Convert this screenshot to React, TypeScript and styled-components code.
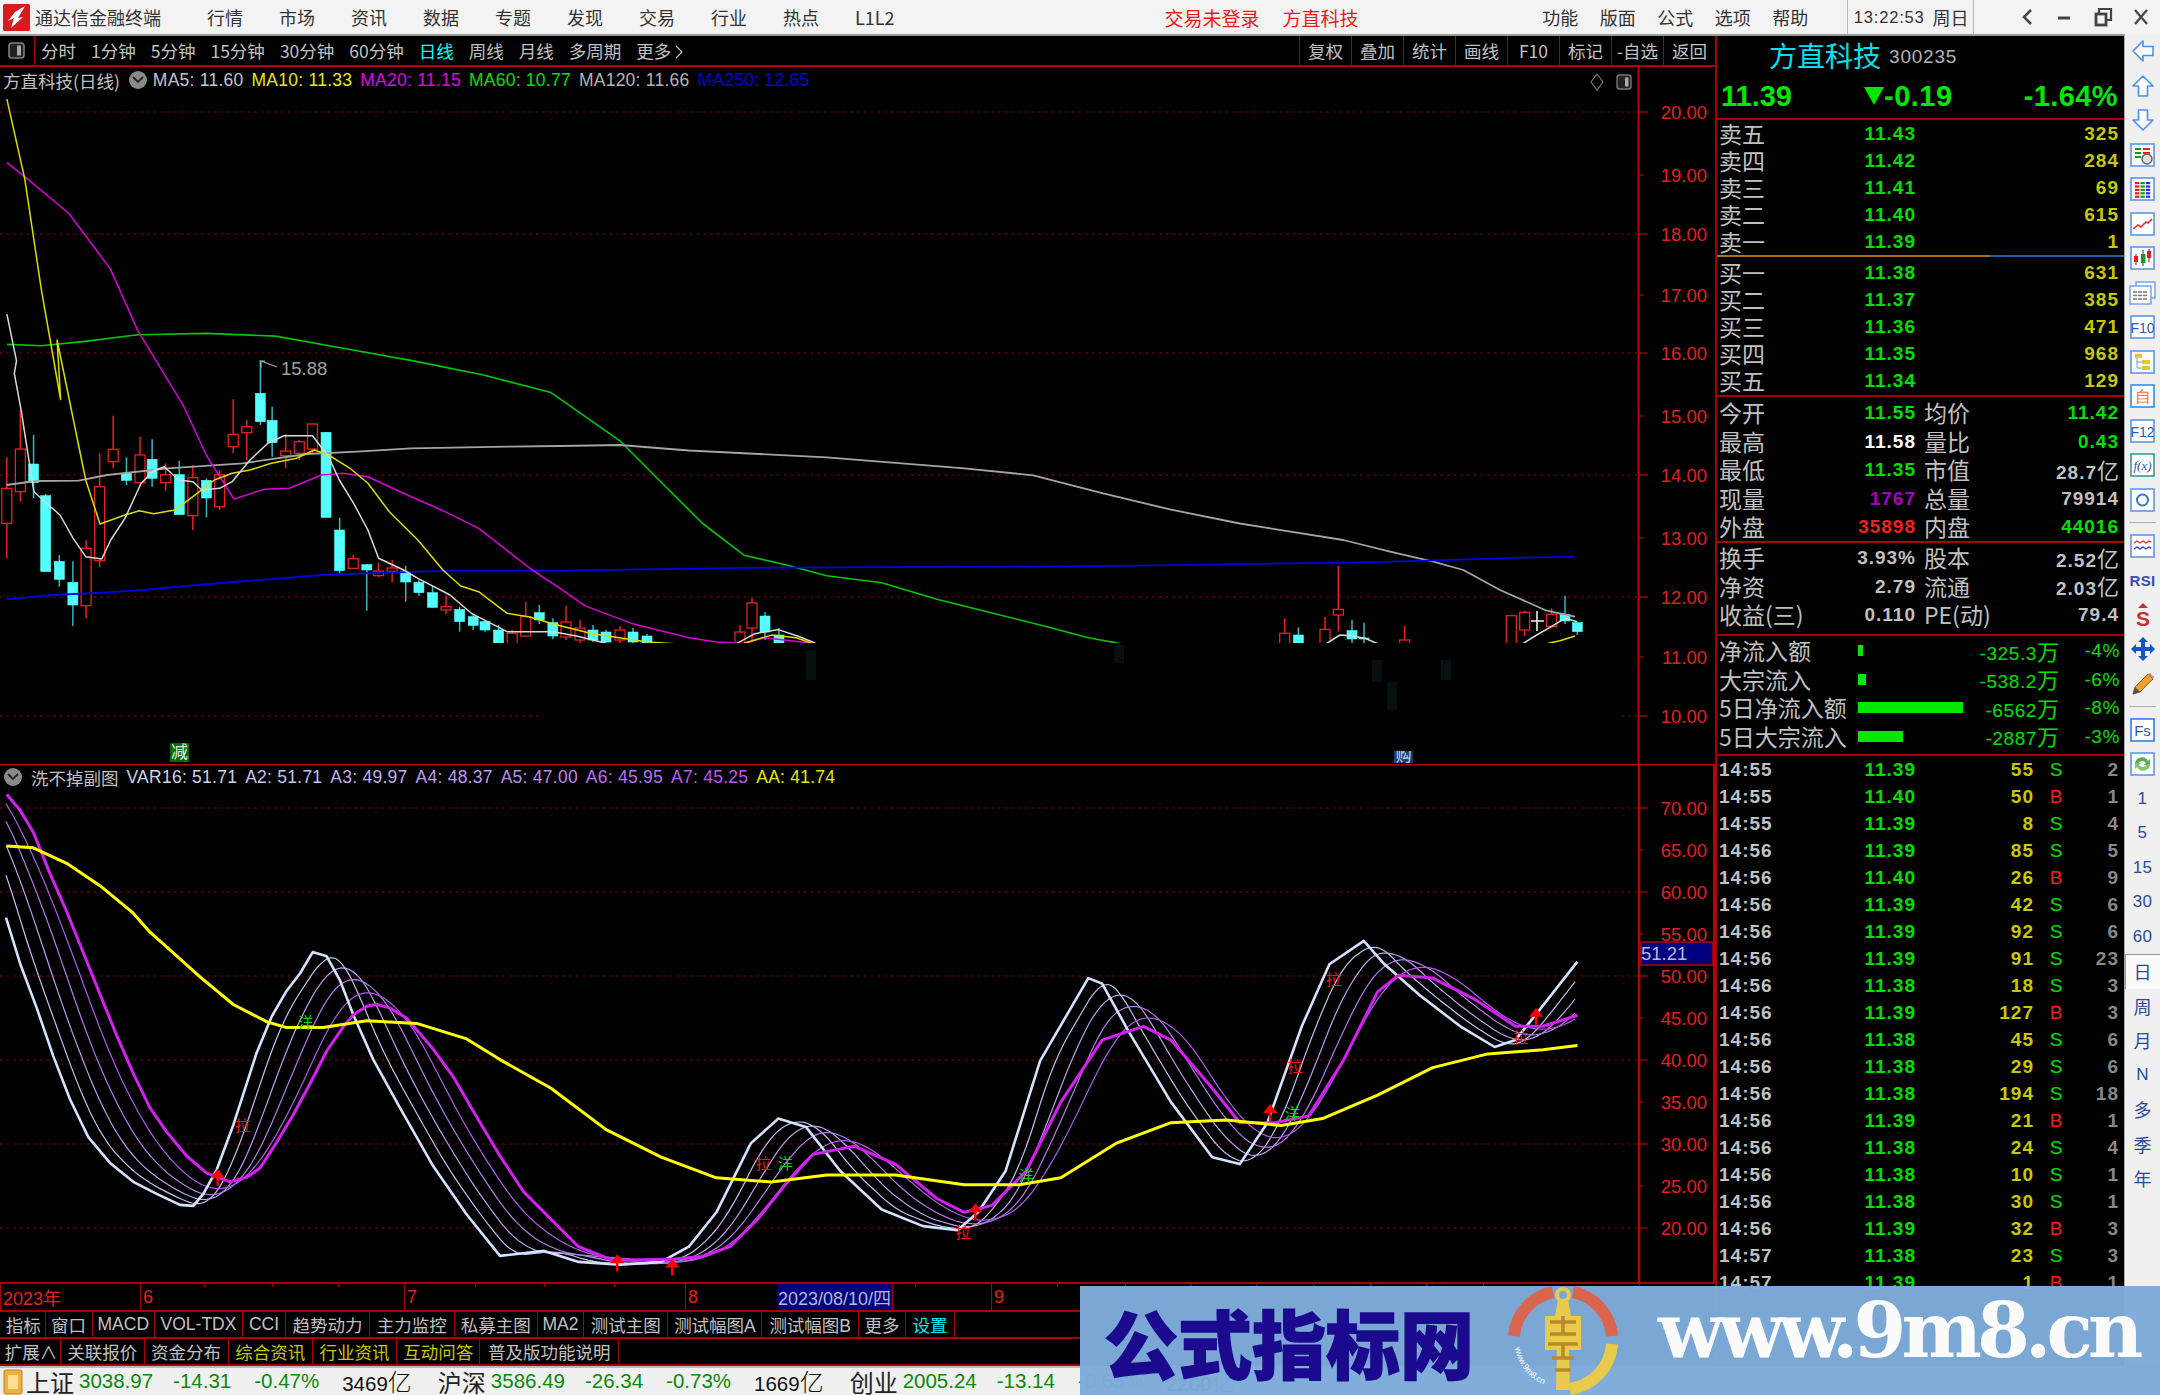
import React from "react";
import styled, { createGlobalStyle } from "styled-components";

const CJK = `"Noto Sans CJK SC", "Noto Sans CJK JP", sans-serif`;
const SANS = `"Liberation Sans", "Noto Sans CJK SC", sans-serif`;
const LINE = "#a80000";

const Global = createGlobalStyle`
  html, body { margin: 0; padding: 0; background: #000; }
  * { box-sizing: border-box; }
`;

const Root = styled.div`
  position: relative;
  width: 2160px;
  height: 1395px;
  overflow: hidden;
  background: #000;
  display: flex;
  flex-direction: column;
  font-family: ${SANS};
`;

/* ---------- title bar ---------- */
const TitleBar = styled.header`
  flex: 0 0 36px;
  height: 36px;
  background: #f3f3f3;
  border-bottom: 2px solid #9a9a9a;
  display: flex;
  align-items: center;
  padding-left: 3px;
  color: #333;
  font-family: ${CJK};
  font-size: 18px;
  white-space: nowrap;
`;
const Brand = styled.span`
  margin-left: 5px;
  width: 126px;
  letter-spacing: 0;
`;
const MainMenu = styled.nav`
  display: flex;
  gap: 36px;
  margin-left: 46px;
`;
const MenuText = styled.span<{ $c?: string }>`
  color: ${(p) => p.$c || "#333"};
`;
const AlertGroup = styled.div`
  display: flex;
  gap: 23px;
  margin-left: 270px;
  color: #f01818;
  font-size: 19px;
`;
const RightMenu = styled.div`
  display: flex;
  gap: 21.5px;
  margin-left: auto;
  align-items: center;
`;
const Clock = styled.div`
  display: flex;
  align-items: center;
  height: 34px;
  margin-left: 17px;
  padding: 0 4px 0 6px;
  border-left: 1px solid #bbb;
  border-right: 1px solid #bbb;
  gap: 8px;
  font-size: 18px;
`;
const ClockTime = styled.span`
  font-family: ${SANS};
  font-size: 16.5px;
  letter-spacing: 0.8px;
`;
const WinButtons = styled.div`
  display: flex;
  align-items: center;
  gap: 14px;
  margin: 0 7px 0 20px;
`;

/* ---------- main ---------- */
const Main = styled.div`
  flex: 0 0 1324px;
  display: flex;
`;
const ChartColumn = styled.section`
  flex: 0 0 1715px;
  display: flex;
  flex-direction: column;
`;

const Toolbar = styled.div`
  flex: 0 0 31px;
  display: flex;
  align-items: stretch;
  border-bottom: 2px solid ${LINE};
  color: #c0c0c0;
  font-family: ${CJK};
  font-size: 17.5px;
`;
const ToolIcon = styled.div`
  flex: 0 0 35px;
  display: flex;
  align-items: center;
  justify-content: center;
  padding-right: 2px;
  border-right: 1px solid ${LINE};
`;
const Periods = styled.div`
  display: flex;
  align-items: center;
  gap: 15px;
  padding-left: 6px;
`;
const Period = styled.span<{ $on?: boolean }>`
  color: ${(p) => (p.$on ? "#00ffff" : "#c0c0c0")};
  white-space: nowrap;
`;
const ToolTabs = styled.div`
  margin-left: auto;
  display: flex;
`;
const ToolTab = styled.div`
  width: 52px;
  display: flex;
  align-items: center;
  justify-content: center;
  border-left: 1px solid ${LINE};
  white-space: nowrap;
`;

const ChartBox = styled.div<{ $h: number }>`
  position: relative;
  flex: 0 0 ${(p) => p.$h}px;
  height: ${(p) => p.$h}px;
  svg { display: block; }
`;
const Legend = styled.div<{ $top: number }>`
  position: absolute;
  top: ${(p) => p.$top}px;
  left: 3px;
  display: flex;
  align-items: center;
  gap: 8px;
  white-space: nowrap;
  height: 20px;
`;
const LegendTitle = styled.span`
  color: #c0c0c0;
  font-family: ${CJK};
  font-size: 17.5px;
`;
const LegendItem = styled.span<{ $c: string }>`
  color: ${(p) => p.$c};
  font-family: "Liberation Sans", sans-serif;
  font-size: 17.5px;
  letter-spacing: 0.25px;
`;
const Chevron = styled.span`
  width: 18px;
  height: 18px;
  border-radius: 50%;
  background: #8a8a8a;
  display: flex;
  align-items: center;
  justify-content: center;
  margin: 0 -2px 0 1px;
`;

const DateAxis = styled.div`
  position: relative;
  flex: 0 0 25px;
  display: flex;
  border-top: 2px solid ${LINE};
  border-bottom: 2px solid ${LINE};
  color: #e02020;
  font-family: ${CJK};
  font-size: 18px;
`;
const DateCell = styled.div<{ $w: number; $on?: boolean }>`
  flex: 0 0 ${(p) => p.$w}px;
  display: flex;
  align-items: center;
  padding-left: ${(p) => (p.$on ? 1 : 2)}px;
  border-left: ${(p) => (p.$on ? "none" : `1px solid ${LINE}`)};
  background: ${(p) => (p.$on ? "#000080" : "transparent")};
  color: ${(p) => (p.$on ? "#b8b8d8" : "#e02020")};
  font-family: "Liberation Sans", "Noto Sans CJK SC", sans-serif;
  font-size: 18px;
  white-space: nowrap;
`;
const DateTick = styled.i`
  position: absolute;
  top: 0;
  width: 1px;
  height: 3px;
  background: ${LINE};
`;

const TabRow = styled.div<{ $h: number }>`
  flex: 0 0 ${(p) => p.$h}px;
  display: flex;
  padding-left: 2px;
  border-bottom: 2px solid ${LINE};
`;
const Tab = styled.div<{ $w: number; $c?: string }>`
  flex: 0 0 ${(p) => p.$w}px;
  display: flex;
  align-items: center;
  justify-content: center;
  border-right: 1px solid ${LINE};
  color: ${(p) => p.$c || "#c0c0c0"};
  font-family: ${SANS};
  font-size: 17.5px;
  white-space: nowrap;
`;

/* ---------- quote panel ---------- */
const Panel = styled.aside`
  flex: 0 0 409px;
  border-left: 2px solid ${LINE};
  display: flex;
  flex-direction: column;
  overflow: hidden;
`;
const NameRow = styled.div`
  flex: 0 0 38px;
  display: flex;
  align-items: center;
  padding-left: 52px;
  gap: 8px;
`;
const StockName = styled.span`
  color: #00e0f0;
  font-family: ${CJK};
  font-size: 28px;
  line-height: 1;
`;
const StockCode = styled.span`
  color: #b4b4b4;
  font-size: 19px;
  letter-spacing: 0.8px;
  margin-top: 3px;
`;
const PriceRow = styled.div`
  flex: 0 0 46px;
  display: flex;
  align-items: center;
  padding: 0 6px 0 4px;
  border-bottom: 2px solid ${LINE};
  color: #00e800;
  font-size: 29px;
  font-weight: 700;
`;
const PriceDelta = styled.span`
  display: flex;
  align-items: center;
  margin-left: 72px;
  letter-spacing: 0.5px;
`;
const PricePct = styled.span`
  margin-left: auto;
  letter-spacing: 0.4px;
`;
const BookDivider = styled.div`
  flex: 0 0 2px;
  background: linear-gradient(to right, #a87020 0 67%, #20609c 67% 100%);
  margin: 0 0 2px;
`;
const Section = styled.div<{ $pt?: number; $pb?: number; $line?: boolean }>`
  flex: none;
  padding-top: ${(p) => p.$pt || 0}px;
  padding-bottom: ${(p) => p.$pb || 0}px;
  border-bottom: ${(p) => (p.$line ? `2px solid ${LINE}` : "none")};
`;
const Row = styled.div<{ $h: number }>`
  height: ${(p) => p.$h}px;
  display: grid;
  grid-template-columns: 60px 137px 64px 1fr;
  align-items: center;
  padding: 0 5px 0 2px;
  white-space: nowrap;
`;
const Label = styled.span`
  color: #c0c0c0;
  font-family: ${CJK};
  font-size: 23px;
  line-height: 1;
`;
const Label2 = styled(Label)`
  padding-left: 8px;
`;
const Num = styled.span<{ $c?: string }>`
  color: ${(p) => p.$c || "#00e000"};
  font-size: 19px;
  font-weight: 700;
  letter-spacing: 1px;
  text-align: right;
  line-height: 1;
`;
const Unit = styled.span`
  font-family: ${CJK};
  font-size: 22px;
  font-weight: 400;
  letter-spacing: 0;
`;
const FundRow = styled.div`
  height: 28.5px;
  display: grid;
  grid-template-columns: 139px 105px 96px 1fr;
  align-items: center;
  padding: 0 4px 0 2px;
  white-space: nowrap;
`;
const FundBar = styled.i`
  display: block;
  height: 11px;
  background: #00e800;
`;
const FundNum = styled.span`
  color: #00e000;
  font-size: 19px;
  letter-spacing: 0.6px;
  text-align: right;
  line-height: 1;
`;
const TickRow = styled.div`
  height: 27px;
  display: grid;
  grid-template-columns: 60px 137px 118px 31px 1fr;
  align-items: center;
  padding: 0 5px 0 2px;
  font-size: 19px;
  font-weight: 700;
  letter-spacing: 1px;
  line-height: 1;
  white-space: nowrap;
`;
const TickTime = styled.span`
  color: #c0c0c0;
`;
const TickCell = styled.span<{ $c: string; $center?: boolean }>`
  color: ${(p) => p.$c};
  text-align: ${(p) => (p.$center ? "center" : "right")};
  font-weight: ${(p) => (p.$center ? 400 : 700)};
  padding-left: ${(p) => (p.$center ? 14 : 0)}px;
`;

/* ---------- side toolbar ---------- */
const SideBar = styled.nav`
  flex: 0 0 36px;
  margin-top: -2px;
  background: #f0f0f0;
  border-left: 1px solid #a8a8a8;
  display: flex;
  flex-direction: column;
  align-items: stretch;
  color: #2b4a9e;
`;
const SideItem = styled.div<{ $on?: boolean }>`
  flex: 0 0 34.5px;
  display: flex;
  align-items: center;
  justify-content: center;
  background: ${(p) => (p.$on ? "#fbfbfb" : "transparent")};
  box-shadow: ${(p) => (p.$on ? "inset 1px 1px 0 #999" : "none")};
`;
const SideSep = styled.div`
  flex: 0 0 11.5px;
  display: flex;
  align-items: center;
  padding: 0 4px;
  &::after { content: ""; width: 100%; height: 1px; background: #b0b0b0; }
`;
const SideNum = styled.span`
  font-size: 17px;
  letter-spacing: 0.3px;
`;
const SideCjk = styled.span`
  font-family: ${CJK};
  font-size: 18px;
`;

/* ---------- status bar ---------- */
const StatusBar = styled.footer`
  flex: 1;
  background: #f0f0f0;
  border-top: 2px solid #bbb;
  display: flex;
  align-items: center;
  padding-left: 3px;
  white-space: nowrap;
`;
const IndexLabel = styled.span`
  font-family: ${CJK};
  font-size: 24px;
  color: #222;
  line-height: 1;
  margin: 0 5px 0 3px;
`;
const IndexValue = styled.span<{ $ml?: number; $k?: boolean }>`
  color: ${(p) => (p.$k ? "#111" : "#0a8a0a")};
  font-size: 20.5px;
  line-height: 1;
  margin-left: ${(p) => p.$ml || 0}px;
`;
const IndexUnit = styled.span`
  font-family: ${CJK};
  font-size: 24px;
  font-weight: 300;
`;
const IndexGap = styled.span`
  width: 23px;
  flex: none;
`;

/* ---------- watermark ---------- */
const Watermark = styled.div`
  position: absolute;
  left: 1080px;
  top: 1286px;
  width: 1080px;
  height: 109px;
  background: rgba(126, 171, 217, 0.975);
  display: flex;
  align-items: center;
  padding-left: 24px;
`;
const WmName = styled.span`
  flex: 0 0 370px;
  color: #1b0a8e;
  font-family: ${CJK};
  font-weight: 900;
  font-size: 74px;
  line-height: 1;
  -webkit-text-stroke: 1.5px #1b0a8e;
  white-space: nowrap;
`;
const WmLogo = styled.div`
  margin-left: 34px;
  flex: 0 0 110px;
  height: 109px;
`;
const WmUrl = styled.span`
  margin-left: 40px;
  color: #fbfbfb;
  font-family: "DejaVu Serif", "Liberation Serif", serif;
  font-weight: 700;
  font-size: 76px;
  letter-spacing: -4.9px;
  line-height: 1;
  white-space: nowrap;
  padding-bottom: 20px;
`;

/* ---------- chart data ---------- */
type P = [number, number];
const z7 = (a: number[][]): P[] => a.map(([x, y]) => [x / 2.8, 340 + y / 3]);
const z8 = (a: number[][]): P[] => a.map(([x, y]) => [1250 + x / 3, 540 + y / 3]);
const z10 = (a: number[][]): P[] => a.map(([x, y]) => [x / 3, 760 + y / 2.904]);
const sh = (a: number[][]): P[] => a.map(([x, y]) => [x * 1.3776, y * 1.3776]);
const d = (p: P[]) => p.map((q) => `${q[0].toFixed(1)},${q[1].toFixed(1)}`).join(" ");

const ma5 = [
  ...sh([[5, 228], [12, 262]]),
  ...z7([[40, 100], [60, 215], [75, 320], [95, 455], [120, 480], [168, 525], [205, 595], [240, 650], [285, 657], [310, 600], [350, 535], [395, 430], [430, 392], [460, 380], [500, 420], [540, 425], [565, 450], [615, 445], [650, 425], [700, 360], [750, 310], [795, 287], [875, 287], [920, 350], [950, 420], [990, 490], [1030, 570], [1060, 655], [1130, 690], [1170, 715], [1260, 765], [1320, 820], [1420, 875], [1550, 875]]),
  ...sh([[420, 462], [440, 467]]),
];
const ma5b = [...sh([[535, 467], [548, 460], [565, 457], [580, 462], [592, 467]])];
const ma5c = z8([[230, 310], [270, 285], [300, 287], [345, 295], [385, 312]]);
const ma5d = z8([[820, 310], [860, 285], [900, 262], [945, 235], [982, 245]]);
const ma10 = [
  ...sh([[5, 72], [18, 130], [30, 210], [44, 290]]),
  ...z7([[160, 0], [200, 210], [240, 420], [280, 552], [350, 525], [390, 512], [430, 521], [490, 510], [540, 470], [600, 420], [650, 400], [700, 390], [760, 370], [830, 355], [880, 330], [920, 345], [980, 385], [1030, 430], [1090, 515], [1170, 600], [1240, 690], [1290, 738], [1340, 755], [1420, 820], [1480, 830], [1560, 855]]),
  ...sh([[430, 460], [470, 466], [500, 468]]),
];
const ma10b = sh([[540, 467], [560, 461], [578, 463], [592, 468]]);
const ma10c = z8([[895, 310], [930, 302], [975, 288]]);
const ma20 = [
  ...sh([[5, 118], [20, 130], [50, 155], [80, 195], [100, 240]]),
  ...z7([[515, 200], [580, 350], [655, 477], [740, 448], [810, 445], [900, 405], [960, 400], [1030, 410], [1120, 455], [1240, 512], [1340, 565], [1490, 690], [1568, 745]]),
  ...sh([[425, 440], [460, 453], [500, 463], [520, 466], [540, 467], [555, 463], [590, 467]]),
];
const ma60 = sh([[5, 250], [30, 251], [60, 248], [100, 243], [150, 242], [200, 244], [250, 253], [300, 262], [350, 272], [400, 285], [450, 320], [480, 350], [510, 380], [540, 403], [570, 410], [600, 418], [640, 423], [680, 435], [720, 445], [760, 455], [790, 463], [812, 467]]);
const ma120 = [
  ...z7([[18, 435], [100, 423], [220, 422], [300, 405], [470, 385], [680, 370], [860, 342], [1000, 335], [1150, 325], [1420, 320], [1568, 318]]),
  ...sh([[450, 323], [500, 327], [600, 332], [700, 340], [750, 345], [800, 358], [850, 370], [900, 380]]),
  ...z8([[280, 0], [420, 35], [550, 65], [640, 90], [750, 150], [890, 212], [975, 230]]),
];
const ma250 = [
  ...z7([[18, 778], [150, 765], [300, 757], [400, 750], [520, 738], [750, 718], [900, 705], [1020, 700], [1270, 692], [1568, 692]]),
  ...sh([[560, 412], [800, 411], [1000, 408], [1100, 405], [1143, 404]]),
];

type C = [number, string, number, number, number, number];
const left: number[][] = [
  [19, 0, 352, 445, 550, 655], [57, 0, 210, 327, 455, 485], [94, 1, 285, 372, 428, 475], [128, 1, 462, 467, 695, 695],
  [166, 1, 645, 664, 718, 740], [204, 1, 664, 727, 795, 858], [241, 0, 600, 625, 797, 835], [279, 0, 340, 440, 662, 682],
  [317, 0, 227, 328, 365, 385], [354, 1, 352, 400, 421, 435], [392, 0, 290, 345, 428, 430], [426, 1, 298, 358, 415, 440],
  [464, 0, 370, 404, 428, 452], [502, 1, 362, 404, 524, 524], [540, 0, 376, 413, 527, 570], [578, 1, 415, 421, 474, 532],
  [615, 0, 390, 404, 500, 510], [653, 0, 178, 283, 320, 340], [691, 0, 240, 260, 278, 360], [729, 1, 60, 160, 245, 255],
  [762, 1, 200, 241, 308, 350], [800, 0, 282, 333, 347, 385], [838, 0, 300, 305, 340, 360], [875, 0, 250, 252, 327, 340],
  [913, 1, 277, 277, 532, 532], [951, 1, 533, 570, 692, 700], [989, 0, 645, 656, 685, 685], [1027, 1, 672, 674, 690, 812],
  [1060, 0, 668, 693, 707, 712], [1098, 0, 660, 684, 694, 727], [1136, 1, 678, 695, 726, 785], [1173, 1, 720, 727, 758, 768],
  [1211, 1, 738, 758, 802, 803], [1249, 0, 766, 800, 810, 822], [1287, 1, 800, 808, 845, 875], [1325, 1, 822, 830, 856, 870],
  [1358, 1, 842, 845, 870, 875], [1396, 1, 855, 870, 930, 935], [1434, 0, 870, 880, 932, 946], [1472, 0, 785, 830, 888, 888],
  [1510, 1, 795, 818, 840, 852], [1548, 1, 835, 848, 888, 898],
];
const right: number[][] = [
  [104, 0, 235, 280, 400, 400], [145, 1, 262, 285, 400, 400], [225, 0, 230, 268, 400, 400], [265, 0, 78, 208, 225, 275],
  [306, 1, 240, 272, 297, 310], [342, 1, 248, 294, 297, 310], [464, 0, 258, 300, 400, 400], [784, 0, 227, 227, 400, 400],
  [824, 0, 212, 217, 270, 288], [905, 0, 205, 223, 260, 262], [945, 1, 167, 224, 243, 252], [982, 1, 248, 248, 275, 285],
];
const mid: C[] = [
  [566, "r", 606, 622, 637, 640], [580, "r", 620, 628, 640, 643], [593, "c", 625, 630, 640, 642], [606, "c", 630, 632, 642, 643],
  [620, "r", 626, 630, 640, 643], [633, "c", 628, 632, 642, 643], [647, "c", 634, 636, 643, 643], [740, "r", 625, 632, 660, 660],
  [752, "r", 598, 603, 628, 640], [765, "c", 612, 616, 632, 640], [779, "c", 628, 635, 660, 660],
];
const candles: C[] = [
  ...left.map((c): C => [c[0] / 2.8, c[1] ? "c" : "r", 340 + c[2] / 3, 340 + c[3] / 3, 340 + c[4] / 3, 340 + c[5] / 3]),
  ...mid,
  ...right.map((c): C => [1250 + c[0] / 3, c[1] ? "c" : "r", 540 + c[2] / 3, 540 + c[3] / 3, 540 + c[4] / 3, 540 + c[5] / 3]),
];

const lineL: P[] = [
  ...z10([[-270, -40], [-198, 20], [-162, 60], [-126, 125], [-90, 175], [-54, 245], [-18, 340], [18, 458], [60, 590], [110, 720], [160, 860], [210, 985], [265, 1095], [330, 1170], [400, 1225], [470, 1260], [540, 1292], [580, 1295], [610, 1260], [650, 1190], [700, 1060], [740, 940], [770, 850], [815, 745], [860, 670], [900, 620], [938, 558], [980, 570], [1020, 640], [1060, 740], [1120, 870], [1200, 1010], [1300, 1180], [1400, 1320], [1500, 1440]]),
  ...sh([[395, 908], [420, 916], [450, 918], [480, 916], [500, 905], [520, 880], [545, 830], [565, 812], [585, 818], [610, 850], [640, 878], [670, 890], [695, 893], [710, 880], [730, 850], [755, 770], [790, 710], [800, 714], [820, 750], [850, 800], [880, 840], [900, 845], [920, 815], [945, 745], [965, 700], [990, 683], [1005, 700], [1030, 722], [1060, 745], [1085, 760], [1100, 755], [1120, 730], [1145, 698]]),
];
const lineM: P[] = [
  ...z10([[20, 100], [60, 145], [100, 210], [150, 330], [200, 440], [250, 560], [300, 680], [350, 800], [400, 910], [450, 1010], [500, 1080], [560, 1150], [620, 1200], [690, 1225], [740, 1212], [780, 1185], [830, 1110], [880, 1030], [930, 940], [980, 845], [1030, 775], [1060, 740], [1100, 715], [1130, 710], [1170, 720], [1220, 750], [1300, 840], [1360, 920], [1420, 1020], [1500, 1150]]),
  ...sh([[380, 865], [400, 885], [420, 905], [445, 915], [490, 914], [510, 912], [530, 905], [550, 885], [570, 860], [590, 838], [620, 832], [650, 845], [680, 870], [700, 880], [720, 875], [745, 850], [770, 800], [800, 755], [830, 745], [850, 755], [880, 790], [900, 815], [925, 815], [950, 810], [975, 770], [1000, 720], [1015, 708], [1040, 710], [1070, 725], [1100, 745], [1120, 745], [1145, 737]]),
];
const lineY: P[] = [
  ...z10([[20, 250], [100, 255], [200, 300], [300, 365], [400, 445], [450, 500], [520, 560], [600, 630], [700, 710], [800, 760], [860, 777], [970, 777], [1100, 757], [1250, 765], [1400, 810], [1500, 870]]),
  ...sh([[400, 790], [440, 820], [480, 840], [520, 855], [560, 858], [600, 853], [650, 853], [700, 860], [740, 860], [770, 855], [810, 830], [850, 815], [890, 813], [930, 817], [960, 812], [1000, 795], [1040, 775], [1080, 765], [1120, 762], [1145, 759]]),
];
const valueAt = (line: P[], x: number) => {
  if (x <= line[0][0]) return line[0][1];
  for (let i = 1; i < line.length; i++) {
    if (x <= line[i][0]) {
      const [x0, y0] = line[i - 1];
      const [x1, y1] = line[i];
      return y0 + ((y1 - y0) * (x - x0)) / (x1 - x0);
    }
  }
  return line[line.length - 1][1];
};
const smoothed = (win: number): P[] => {
  const out: P[] = [];
  for (let x = 6; x <= 1577; x += 3) {
    let sum = 0;
    let n = 0;
    for (let t = x - win; t <= x; t += 3) {
      sum += valueAt(lineL, t);
      n++;
    }
    out.push([x, sum / n]);
  }
  return out;
};
const thin = [
  { win: 27, c: "#c8c0f4" },
  { win: 54, c: "#bca0ec" },
  { win: 81, c: "#b47ce8" },
  { win: 108, c: "#ae5ce8" },
];

const sigArrow = sh([[158, 855], [448, 917], [488, 920], [708, 880], [922, 808], [1115, 738]]);
const sigLa = sh([[176, 817], [554, 844], [699, 894], [940, 774], [968, 711], [1104, 753]]);
const sigGreen = sh([[222, 742], [570, 844], [745, 853], [938, 808]]);

const topAxis: [number, string, boolean][] = [
  [112, "20.00", true], [175, "19.00", false], [234, "18.00", true], [295, "17.00", false], [353, "16.00", true],
  [416, "15.00", false], [475, "14.00", true], [538, "13.00", false], [597, "12.00", true], [657, "11.00", false], [716, "10.00", true],
];
const subAxis = [70, 65, 60, 55, 50, 45, 40, 35, 30, 25, 20];

const TopChart = () => (
  <svg width={1715} height={697} viewBox="0 67 1715 697" fontFamily="Liberation Sans, sans-serif">
    <defs>
      <clipPath id="cut"><rect x="0" y="67" width="1638" height="576" /></clipPath>
      <clipPath id="lbl"><rect x="1385" y="751" width="40" height="12" /></clipPath>
    </defs>
    {topAxis.filter((a) => a[2]).map((a) => (
      <line key={a[0]} x1="0" x2={a[0] === 716 ? 537 : 1638} y1={a[0]} y2={a[0]} stroke="#b00000" strokeDasharray="2 4.7" />
    ))}
    <line x1="1622" x2="1638" y1="716" y2="716" stroke="#b00000" strokeDasharray="2 4.7" />
    <line x1="1638.5" x2="1638.5" y1="67" y2="764" stroke="#c00000" strokeWidth="2" />
    {topAxis.map((a) => (
      <g key={a[1]}>
        <line x1="1640" x2={a[2] ? 1647 : 1643} y1={a[0]} y2={a[0]} stroke="#c00000" strokeWidth="1.2" />
        <text x="1707" y={a[0] + 7} textAnchor="end" fontSize="18.5" fill="#e02020">{a[1]}</text>
      </g>
    ))}
    <g clipPath="url(#cut)">
      {candles.map((c, i) => {
        const col = c[1] === "c" ? "#54ffff" : "#e82020";
        return (
          <g key={i}>
            <line x1={c[0]} x2={c[0]} y1={c[2]} y2={c[5]} stroke={c[1] === "c" ? "#30b8c0" : col} strokeWidth="1.5" />
            <rect x={c[0] - 5} y={c[3]} width="10" height={Math.max(c[4] - c[3], 1)} fill={c[1] === "c" ? col : "#000"} stroke={col} strokeWidth={c[1] === "c" ? 0.6 : 1.3} />
          </g>
        );
      })}
      <path d="M1537 611v20M1531 621h13" stroke="#eee" strokeWidth="1.6" />
      <g fill="none" strokeLinejoin="round">
        <polyline points={d(ma60)} stroke="#00c800" strokeWidth="1.6" />
        <polyline points={d(ma120)} stroke="#a4a4a4" strokeWidth="1.8" />
        <polyline points={d(ma250)} stroke="#0000e8" strokeWidth="1.8" />
        <polyline points={d(ma20)} stroke="#d800d8" strokeWidth="1.5" />
        <polyline points={d(ma10)} stroke="#dcdc00" strokeWidth="1.5" />
        <polyline points={d(ma10b)} stroke="#dcdc00" strokeWidth="1.5" />
        <polyline points={d(ma10c)} stroke="#dcdc00" strokeWidth="1.5" />
        <polyline points={d(ma5)} stroke="#d8d8d8" strokeWidth="1.5" />
        <polyline points={d(ma5b)} stroke="#d8d8d8" strokeWidth="1.5" />
        <polyline points={d(ma5c)} stroke="#d8d8d8" strokeWidth="1.5" />
        <polyline points={d(ma5d)} stroke="#d8d8d8" strokeWidth="1.5" />
      </g>
    </g>
    <g fill="#071010">
      <rect x="806" y="650" width="10" height="30" />
      <rect x="1372" y="660" width="10" height="22" />
      <rect x="1387" y="682" width="10" height="28" />
      <rect x="1441" y="660" width="10" height="20" />
      <rect x="1114" y="645" width="10" height="18" />
    </g>
    <path d="M261 361l16 6M261 361v7M261 361h4" stroke="#a8a8a8" fill="none" strokeWidth="1.1" />
    <text x="281" y="375" fontSize="18.5" fill="#a0a0a0">15.88</text>
    <rect x="170" y="743" width="19" height="19" fill="#006c00" />
    <text x="179.5" y="758" textAnchor="middle" fontSize="17" fontFamily="Noto Sans CJK SC, sans-serif" fill="#e8e8e8">减</text>
    <g clipPath="url(#lbl)">
      <rect x="1394" y="751" width="19" height="12" fill="#104070" />
      <text x="1403.5" y="761" textAnchor="middle" fontSize="16" fontFamily="Noto Sans CJK SC, sans-serif" fill="#d0d8e8">购</text>
    </g>
    <path d="M1597 74l6 8-6 8-6-8z" fill="none" stroke="#777" strokeWidth="1.2" />
    <rect x="1617" y="75" width="14" height="14" rx="2.5" fill="#222" stroke="#777" strokeWidth="1.4" />
    <rect x="1625" y="77.5" width="3.5" height="9" fill="#aaa" />
  </svg>
);

const SubChart = () => (
  <svg width={1715} height={518} viewBox="0 764 1715 518" fontFamily="Liberation Sans, sans-serif">
    <line x1="0" x2="1715" y1="764.5" y2="764.5" stroke="#c00000" strokeWidth="2" />
    {subAxis.filter((v) => v % 10 === 0).map((v) => {
      const y = 808 + (70 - v) * 8.4;
      return <line key={v} x1="0" x2="1638" y1={y} y2={y} stroke="#b00000" strokeDasharray="2 4.7" />;
    })}
    <line x1="1639" x2="1639" y1="764" y2="1282" stroke="#c00000" strokeWidth="2.4" />
    <line x1="1714" x2="1714" y1="764" y2="1282" stroke="#c00000" strokeWidth="2" />
    {subAxis.map((v) => {
      const y = 808 + (70 - v) * 8.4;
      return (
        <g key={v}>
          <line x1="1640" x2={v % 10 === 0 ? 1647 : 1643} y1={y} y2={y} stroke="#c00000" strokeWidth="1.2" />
          <text x="1707" y={y + 7} textAnchor="end" fontSize="18.5" fill="#e02020">{v}.00</text>
        </g>
      );
    })}
    <rect x="1641" y="942" width="72" height="23" fill="#000080" stroke="#c00000" strokeWidth="1.4" />
    <text x="1641" y="960" fontSize="18.5" fill="#b8b8d8">51.21</text>
    <g fill="none" strokeLinejoin="round">
      {thin.map((t) => (
        <polyline key={t.win} points={d(smoothed(t.win))} stroke={t.c} strokeWidth="1.2" />
      ))}
      <polyline points={d(lineL.filter((p) => p[0] >= 5))} stroke="#d2e2ff" strokeWidth="2.6" />
      <polyline points={d(lineM)} stroke="#d420f0" strokeWidth="3" />
      <polyline points={d(lineY)} stroke="#ffff00" strokeWidth="3" />
    </g>
    {sigArrow.map((p, i) => (
      <path key={i} d={`M${p[0]} ${p[1] - 9}l7 9h-5.8v8h-2.4v-8h-5.8z`} fill="#ff0000" />
    ))}
    <g fontFamily="Noto Sans CJK SC, sans-serif" fontSize="15" textAnchor="middle">
      {sigLa.map((p, i) => (
        <text key={i} x={p[0]} y={p[1] + 6} fill="#ff1010">拉</text>
      ))}
      {sigGreen.map((p, i) => (
        <text key={i} x={p[0]} y={p[1] + 6} fill="#00e000">洋</text>
      ))}
    </g>
  </svg>
);

const AppLogo = () => (
  <svg width="27" height="27" viewBox="0 0 27 27">
    <rect width="27" height="27" rx="1.5" fill="#d81c1c" />
    <path d="M22 2 12 8 5 17l6-3-3 10 12-11-5 1z" fill="#fff" />
  </svg>
);

const Box = ({ children, c = "#5b98ee" }: { children: React.ReactNode; c?: string }) => (
  <svg width="25" height="24" viewBox="0 0 25 24">
    <rect x="1" y="1" width="23" height="22" fill="#fff" stroke={c} strokeWidth="1.6" />
    {children}
  </svg>
);
const BoxText = ({ t, c = "#2b5ab0", s = 15 }: { t: string; c?: string; s?: number }) => (
  <text x="12.5" y="17.5" textAnchor="middle" fontSize={s} fontFamily="Liberation Sans, sans-serif" fill={c}>{t}</text>
);
const Arrow = ({ rot }: { rot: number }) => (
  <svg width="24" height="24" viewBox="0 0 24 24">
    <path transform={`rotate(${rot} 12 12)`} d="M12 2 22 12h-5.5v10h-9V12H2z" fill="#fff" stroke="#4a90f0" strokeWidth="1.6" strokeLinejoin="round" />
  </svg>
);
const bars = (colors: string[]) =>
  colors.map((c, i) => <rect key={i} x={5 + (i % 3) * 5.4} y={5 + Math.floor(i / 3) * 3.4} width="4.4" height="2.2" fill={c} />);

const sideItems: React.ReactNode[] = [
  <Arrow rot={-90} />, <Arrow rot={0} />, <Arrow rot={180} />,
  <Box><rect x="5" y="5" width="6" height="2" fill="#1a9a1a" /><rect x="13" y="5" width="7" height="2" fill="#e02020" /><rect x="5" y="9" width="6" height="2" fill="#1a9a1a" /><rect x="13" y="9" width="7" height="2" fill="#e02020" /><rect x="5" y="13" width="6" height="2" fill="#1a9a1a" /><circle cx="17" cy="16" r="5" fill="#ddd" stroke="#666" strokeWidth="1.5" /></Box>,
  <Box>{bars(["#e02020", "#1a9a1a", "#2030e0", "#e02020", "#1a9a1a", "#2030e0", "#e02020", "#1a9a1a", "#2030e0", "#e02020", "#1a9a1a", "#2030e0", "#e02020", "#1a9a1a", "#2030e0"])}</Box>,
  <Box><path d="M3 17l5-4 3 2 5-5 2 1 4-4" fill="none" stroke="#e83030" strokeWidth="1.6" /></Box>,
  <Box><path d="M6 8v11M13 4v16M19 3v13" stroke="#333" strokeWidth="1" /><rect x="4" y="10" width="4" height="6" fill="#e02020" /><rect x="11" y="8" width="4.5" height="9" fill="#109a30" /><rect x="17" y="5" width="4" height="7" fill="#e02020" /></Box>,
  <svg width="27" height="24" viewBox="0 0 27 24"><rect x="7" y="1" width="19" height="16" fill="#fff" stroke="#6aa0ea" strokeWidth="1.4" /><rect x="1" y="5" width="21" height="18" fill="#fff" stroke="#6aa0ea" strokeWidth="1.4" /><path d="M4 11h15M4 14.500h15M4 18h15" stroke="#777" strokeWidth="1.6" strokeDasharray="4 1" /></svg>,
  <Box><BoxText t="F10" s={14} /></Box>,
  <Box><rect x="5" y="4" width="7" height="4" fill="#f0c030" /><rect x="12" y="10" width="8" height="4" fill="#f0c030" /><rect x="12" y="16" width="8" height="4" fill="#f0c030" /><path d="M7 8v10h5M7 12h5" fill="none" stroke="#6aa0ea" /></Box>,
  <Box c="#2f90ee"><BoxText t="自" c="#f07030" s={16} /></Box>,
  <Box><BoxText t="F12" s={14} /></Box>,
  <Box c="#3a9a9a"><text x="12.5" y="17" textAnchor="middle" fontSize="13" fontStyle="italic" fill="#2b5ab0" fontFamily="Liberation Serif, serif">f(x)</text></Box>,
  <Box><circle cx="12.500" cy="12" r="5.500" fill="none" stroke="#2f7ac8" strokeWidth="2" /></Box>,
  "sep",
  <Box><path d="M4 9l3-2 3 2 3-2 3 2 3-2 2 1" fill="none" stroke="#e83030" strokeWidth="1.4" /><path d="M4 15l3-2 3 2 3-2 3 2 3-2 2 1" fill="none" stroke="#3040e0" strokeWidth="1.4" /></Box>,
  <SideNum as="b" style={{ fontSize: 15, color: "#3a4cb8" }}>RSI</SideNum>,
  <svg width="22" height="26" viewBox="0 0 22 26"><path d="M11 1l5 5H6z" fill="#c03030" /><text x="11" y="24" textAnchor="middle" fontSize="21" fontWeight="700" fontFamily="Liberation Sans, sans-serif" fill="#cc3030">S</text></svg>,
  <svg width="26" height="26" viewBox="0 0 26 26"><path d="M13 1l5 5h-3v5h5V8l5 5-5 5v-3h-5v5h3l-5 5-5-5h3v-5H6v3l-5-5 5-5v3h5V6H8z" fill="#1850c8" /></svg>,
  <svg width="26" height="26" viewBox="0 0 26 26"><path d="M3 23l2-7L18 3l5 5L10 21z" fill="#e8a030" stroke="#8a6020" strokeWidth="1" /><path d="M18 3l5 5 1-2-4-4z" fill="#e08080" /><path d="M3 23l2-7 5 5z" fill="#555" /></svg>,
  "sep",
  <Box c="#2f80ee"><BoxText t="Fs" s={15} /></Box>,
  <Box><path d="M5 11a7 7 0 0 1 13-2l2-2v6h-6l2-2a4.500 4.500 0 0 0-8 1z" fill="#50b050" /><path d="M20 13a7 7 0 0 1-13 2l-2 2v-6h6l-2 2a4.500 4.500 0 0 0 8-1z" fill="#80c870" /></Box>,
  <SideNum>1</SideNum>, <SideNum>5</SideNum>, <SideNum>15</SideNum>, <SideNum>30</SideNum>, <SideNum>60</SideNum>,
  "on:日", <SideCjk>周</SideCjk>, <SideCjk>月</SideCjk>, <SideNum>N</SideNum>, <SideCjk>多</SideCjk>, <SideCjk>季</SideCjk>, <SideCjk>年</SideCjk>,
];

const periods = ["分时", "1分钟", "5分钟", "15分钟", "30分钟", "60分钟", "日线", "周线", "月线", "多周期"];
const toolTabs = ["复权", "叠加", "统计", "画线", "F10", "标记", "-自选", "返回"];
const maLegend: [string, string][] = [
  ["MA5: 11.60", "#c4c4c4"], ["MA10: 11.33", "#e8e800"], ["MA20: 11.15", "#e000e0"],
  ["MA60: 10.77", "#00e000"], ["MA120: 11.66", "#b4b4b4"], ["MA250: 12.65", "#0000e0"],
];
const subLegend: [string, string][] = [
  ["VAR16: 51.71", "#ccd4e8"], ["A2: 51.71", "#c0c4ec"], ["A3: 49.97", "#c0b0f0"], ["A4: 48.37", "#bc9cf0"],
  ["A5: 47.00", "#bc88f0"], ["A6: 45.95", "#bc70f0"], ["A7: 45.25", "#bc58f0"], ["AA: 41.74", "#e8e800"],
];
const dateCells: [number, string, boolean?][] = [
  [140, "2023年"], [264, "6"], [281, "7"], [92, "8"], [115, "2023/08/10/四", true], [99, ""], [134, "9"],
  [65, ""], [66, ""], [57, ""], [57, ""], [56, ""], [57, ""], [156, ""], [75, ""],
];
const dateTicks = [204, 272, 338, 475, 544, 614, 915, 1057];
const tabs1: [number, string, string?][] = [
  [43.6, "指标"], [47, "窗口"], [62.4, "MACD"], [88, "VOL-TDX"], [43, "CCI"], [84, "趋势动力"], [84.6, "主力监控"],
  [83.4, "私募主图"], [46, "MA2"], [84.5, "测试主图"], [94, "测试幅图A"], [96.5, "测试幅图B"], [47, "更多"], [49, "设置", "#00e8e8"],
];
const tabs2: [number, string, string?][] = [
  [59, "扩展∧"], [83.5, "关联报价"], [84.2, "资金分布"], [84.3, "综合资讯", "#c8c800"], [84, "行业资讯", "#c8c800"],
  [83.5, "互动问答", "#c8c800"], [138.5, "普及版功能说明"],
];
const sell: [string, string, string][] = [["卖五", "11.43", "325"], ["卖四", "11.42", "284"], ["卖三", "11.41", "69"], ["卖二", "11.40", "615"], ["卖一", "11.39", "1"]];
const buy: [string, string, string][] = [["买一", "11.38", "631"], ["买二", "11.37", "385"], ["买三", "11.36", "471"], ["买四", "11.35", "968"], ["买五", "11.34", "129"]];
const GRAY = "#c0c0c0";
const GREEN = "#00e000";
const stats: [string, string, string, string, string, string?, string?][] = [
  ["今开", "11.55", GREEN, "均价", "11.42", GREEN],
  ["最高", "11.58", "#ffffff", "量比", "0.43", GREEN],
  ["最低", "11.35", GREEN, "市值", "28.7", GRAY, "亿"],
  ["现量", "1767", "#a800c0", "总量", "79914", GRAY],
  ["外盘", "35898", "#f02020", "内盘", "44016", GREEN],
];
const stats2: [string, string, string, string, string, string?, string?][] = [
  ["换手", "3.93%", GRAY, "股本", "2.52", GRAY, "亿"],
  ["净资", "2.79", GRAY, "流通", "2.03", GRAY, "亿"],
  ["收益(三)", "0.110", GRAY, "PE(动)", "79.4", GRAY],
];
const funds: [string, number, string, string][] = [
  ["净流入额", 5, "-325.3", "-4%"], ["大宗流入", 8, "-538.2", "-6%"], ["5日净流入额", 105, "-6562", "-8%"], ["5日大宗流入", 45, "-2887", "-3%"],
];
const ticks: [string, string, string, string, string][] = [
  ["14:55", "11.39", "55", "S", "2"], ["14:55", "11.40", "50", "B", "1"], ["14:55", "11.39", "8", "S", "4"], ["14:56", "11.39", "85", "S", "5"],
  ["14:56", "11.40", "26", "B", "9"], ["14:56", "11.39", "42", "S", "6"], ["14:56", "11.39", "92", "S", "6"], ["14:56", "11.39", "91", "S", "23"],
  ["14:56", "11.38", "18", "S", "3"], ["14:56", "11.39", "127", "B", "3"], ["14:56", "11.38", "45", "S", "6"], ["14:56", "11.38", "29", "S", "6"],
  ["14:56", "11.38", "194", "S", "18"], ["14:56", "11.39", "21", "B", "1"], ["14:56", "11.38", "24", "S", "4"], ["14:56", "11.38", "10", "S", "1"],
  ["14:56", "11.38", "30", "S", "1"], ["14:56", "11.39", "32", "B", "3"], ["14:57", "11.38", "23", "S", "3"], ["14:57", "11.39", "1", "B", "1"],
];
const indices: [string, string, string, string, string][] = [
  ["上证", "3038.97", "-14.31", "-0.47%", "3469"],
  ["沪深", "3586.49", "-26.34", "-0.73%", "1669"],
  ["创业", "2005.24", "-13.14", "-0.65%", "2200"],
];

const WaterLogo = () => (
  <svg width="110" height="109" viewBox="0 0 110 109">
    <defs>
      <path id="wmArc" d="M7 62 A48 48 0 0 0 48 102" />
    </defs>
    <path d="M6 50A49 49 0 0 1 45 6" fill="none" stroke="#d9654e" strokeWidth="12" />
    <path d="M65 6A49 49 0 0 1 104 50" fill="none" stroke="#d9654e" strokeWidth="12" />
    <path d="M104 58A49 49 0 0 1 62 103" fill="none" stroke="#e8cb4a" strokeWidth="12" />
    <text fontSize="8.500" fill="#fff" fontFamily="Liberation Sans, sans-serif"><textPath href="#wmArc">www.9m8.cn</textPath></text>
    <circle cx="55" cy="9" r="6" fill="none" stroke="#e8cb4a" strokeWidth="4" />
    <path d="M50 14h10l3 16h10v34H61l1 40H48l1-40H37V30h10z" fill="#e8cb4a" />
    <path d="M42 36h26M55 30v18M42 48h26M40 58h30M55 58v14M44 72h22M47 84h16" stroke="#b88a2a" strokeWidth="3.500" fill="none" />
  </svg>
);

export default function App() {
  return (
    <Root>
      <Global />
      <TitleBar>
        <AppLogo />
        <Brand>通达信金融终端</Brand>
        <MainMenu>
          {["行情", "市场", "资讯", "数据", "专题", "发现", "交易", "行业", "热点", "L1L2"].map((m) => (
            <MenuText key={m}>{m}</MenuText>
          ))}
        </MainMenu>
        <AlertGroup>
          <span>交易未登录</span>
          <span>方直科技</span>
        </AlertGroup>
        <RightMenu>
          {["功能", "版面", "公式", "选项", "帮助"].map((m) => (
            <MenuText key={m}>{m}</MenuText>
          ))}
          <Clock>
            <ClockTime>13:22:53</ClockTime>
            <span>周日</span>
          </Clock>
          <WinButtons>
            <svg width="24" height="20" viewBox="0 0 24 20"><path d="M16 3 9 10l7 7" fill="none" stroke="#444" strokeWidth="2.5" /></svg>
            <svg width="24" height="20" viewBox="0 0 24 20"><path d="M5 11h12" stroke="#444" strokeWidth="3" /></svg>
            <svg width="24" height="20" viewBox="0 0 24 20"><path d="M8 7V2h12v11h-4" fill="none" stroke="#444" strokeWidth="2.2" /><rect x="5" y="7" width="10" height="11" fill="none" stroke="#444" strokeWidth="2.8" /></svg>
            <svg width="24" height="20" viewBox="0 0 24 20"><path d="M6 3l12 14M18 3 6 17" stroke="#444" strokeWidth="2.2" /></svg>
          </WinButtons>
        </RightMenu>
      </TitleBar>

      <Main>
        <ChartColumn>
          <Toolbar>
            <ToolIcon>
              <svg width="17" height="17" viewBox="0 0 17 17"><rect x="1" y="1" width="15" height="15" rx="3" fill="#222" stroke="#808080" strokeWidth="1.6" /><rect x="9" y="3.500" width="4" height="10" fill="#a8a8a8" /></svg>
            </ToolIcon>
            <Periods>
              {periods.map((p) => (
                <Period key={p} $on={p === "日线"}>{p}</Period>
              ))}
              <Period>
                更多
                <svg width="12" height="16" viewBox="0 0 12 16" style={{ marginLeft: 2, verticalAlign: "-2px" }}><path d="M3 2l6 6-6 6" fill="none" stroke="#c0c0c0" strokeWidth="1.3" /></svg>
              </Period>
            </Periods>
            <ToolTabs>
              {toolTabs.map((t) => (
                <ToolTab key={t}>{t}</ToolTab>
              ))}
            </ToolTabs>
          </Toolbar>

          <ChartBox $h={697}>
            <TopChart />
            <Legend $top={3}>
              <LegendTitle>方直科技(日线)</LegendTitle>
              <Chevron>
                <svg width="12" height="8" viewBox="0 0 12 8"><path d="M1 1l5 5 5-5" fill="none" stroke="#222" strokeWidth="1.8" /></svg>
              </Chevron>
              {maLegend.map(([t, c]) => (
                <LegendItem key={t} $c={c}>{t}</LegendItem>
              ))}
            </Legend>
          </ChartBox>

          <ChartBox $h={518}>
            <SubChart />
            <Legend $top={3}>
              <Chevron>
                <svg width="12" height="8" viewBox="0 0 12 8"><path d="M1 1l5 5 5-5" fill="none" stroke="#222" strokeWidth="1.8" /></svg>
              </Chevron>
              <LegendTitle style={{ marginLeft: 3 }}>洗不掉副图</LegendTitle>
              {subLegend.map(([t, c]) => (
                <LegendItem key={t} $c={c}>{t}</LegendItem>
              ))}
            </Legend>
          </ChartBox>

          <DateAxis>
            {dateCells.map(([w, t, on], i) => (
              <DateCell key={i} $w={w} $on={on}>{t}</DateCell>
            ))}
            {dateTicks.map((x) => (
              <DateTick key={x} style={{ left: x }} />
            ))}
          </DateAxis>
          <TabRow $h={26}>
            {tabs1.map(([w, t, c]) => (
              <Tab key={t} $w={w} $c={c}>{t}</Tab>
            ))}
          </TabRow>
          <TabRow $h={27}>
            {tabs2.map(([w, t, c]) => (
              <Tab key={t} $w={w} $c={c}>{t}</Tab>
            ))}
          </TabRow>
        </ChartColumn>

        <Panel>
          <NameRow>
            <StockName>方直科技</StockName>
            <StockCode>300235</StockCode>
          </NameRow>
          <PriceRow>
            <span>11.39</span>
            <PriceDelta>
              <svg width="20" height="20" viewBox="0 0 20 20"><path d="M0 1h20L10 19z" fill="#00e800" /></svg>
              -0.19
            </PriceDelta>
            <PricePct>-1.64%</PricePct>
          </PriceRow>
          <Section>
            {sell.map(([a, b, c]) => (
              <Row $h={27} key={a}>
                <Label>{a}</Label>
                <Num>{b}</Num>
                <i />
                <Num $c="#c8c800">{c}</Num>
              </Row>
            ))}
          </Section>
          <BookDivider />
          <Section $line $pb={1}>
            {buy.map(([a, b, c]) => (
              <Row $h={27} key={a}>
                <Label>{a}</Label>
                <Num>{b}</Num>
                <i />
                <Num $c="#c8c800">{c}</Num>
              </Row>
            ))}
          </Section>
          <Section $line $pt={1.5}>
            {stats.map(([a, b, bc, c, v, vc, u]) => (
              <Row $h={28.5} key={a}>
                <Label>{a}</Label>
                <Num $c={bc}>{b}</Num>
                <Label2>{c}</Label2>
                <Num $c={vc}>{v}{u && <Unit>{u}</Unit>}</Num>
              </Row>
            ))}
          </Section>
          <Section $line $pt={0.5} $pb={5}>
            {stats2.map(([a, b, bc, c, v, vc, u]) => (
              <Row $h={28.5} key={a}>
                <Label>{a}</Label>
                <Num $c={bc}>{b}</Num>
                <Label2>{c}</Label2>
                <Num $c={vc}>{v}{u && <Unit>{u}</Unit>}</Num>
              </Row>
            ))}
          </Section>
          <Section $line $pt={0.5} $pb={3}>
            {funds.map(([a, w, v, pct]) => (
              <FundRow key={a}>
                <Label>{a}</Label>
                <div><FundBar style={{ width: w }} /></div>
                <FundNum>{v}<Unit>万</Unit></FundNum>
                <FundNum>{pct}</FundNum>
              </FundRow>
            ))}
          </Section>
          <Section>
            {ticks.map(([tm, p, v, s, n], i) => (
              <TickRow key={i}>
                <TickTime>{tm}</TickTime>
                <TickCell $c={GREEN}>{p}</TickCell>
                <TickCell $c="#c8c800">{v}</TickCell>
                <TickCell $c={s === "B" ? "#f02020" : GREEN} $center>{s}</TickCell>
                <TickCell $c="#888">{n}</TickCell>
              </TickRow>
            ))}
          </Section>
        </Panel>

        <SideBar>
          {sideItems.map((it, i) => {
            if (it === "sep") return <SideSep key={i} />;
            if (it === "on:日") return <SideItem key={i} $on><SideCjk>日</SideCjk></SideItem>;
            return <SideItem key={i}>{it}</SideItem>;
          })}
        </SideBar>
      </Main>

      <StatusBar>
        <svg width="20" height="26" viewBox="0 0 20 26"><rect x="1" y="1" width="18" height="24" rx="2" fill="#f0b040" stroke="#c08020" /><rect x="5" y="6" width="10" height="14" fill="#ffe090" /></svg>
        {indices.map(([n, v, c, p, a]) => (
          <React.Fragment key={n}>
            <IndexLabel>{n}</IndexLabel>
            <IndexValue>{v}</IndexValue>
            <IndexValue $ml={20}>{c}</IndexValue>
            <IndexValue $ml={23}>{p}</IndexValue>
            <IndexValue $ml={23} $k>{a}<IndexUnit>亿</IndexUnit></IndexValue>
            <IndexGap />
          </React.Fragment>
        ))}
      </StatusBar>

      <Watermark>
        <WmName>公式指标网</WmName>
        <WmLogo><WaterLogo /></WmLogo>
        <WmUrl>www.9m8.cn</WmUrl>
      </Watermark>
    </Root>
  );
}
